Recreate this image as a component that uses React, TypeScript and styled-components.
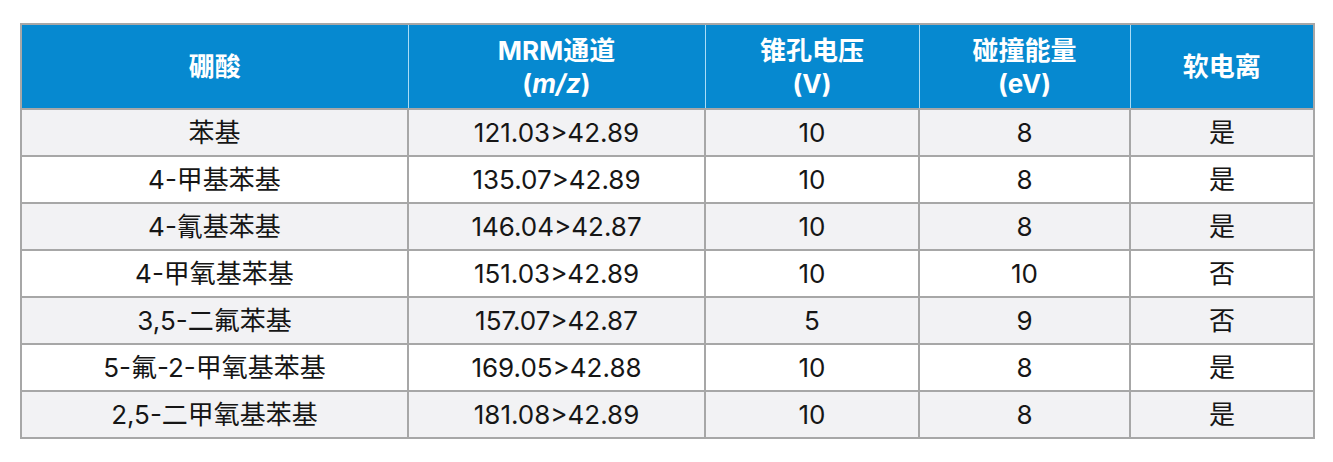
import React from 'react';
import styled, { createGlobalStyle } from 'styled-components';

const GlobalStyle = createGlobalStyle`
  body {
    margin: 0;
    background: #ffffff;
    font-family: Inter, 'Noto Sans CJK SC', sans-serif;
  }
`;

interface Row {
  name: string;
  mrm: string;
  cone: string;
  energy: string;
  soft: string;
}

const rows: Row[] = [
  { name: '苯基', mrm: '121.03>42.89', cone: '10', energy: '8', soft: '是' },
  { name: '4-甲基苯基', mrm: '135.07>42.89', cone: '10', energy: '8', soft: '是' },
  { name: '4-氰基苯基', mrm: '146.04>42.87', cone: '10', energy: '8', soft: '是' },
  { name: '4-甲氧基苯基', mrm: '151.03>42.89', cone: '10', energy: '10', soft: '否' },
  { name: '3,5-二氟苯基', mrm: '157.07>42.87', cone: '5', energy: '9', soft: '否' },
  { name: '5-氟-2-甲氧基苯基', mrm: '169.05>42.88', cone: '10', energy: '8', soft: '是' },
  { name: '2,5-二甲氧基苯基', mrm: '181.08>42.89', cone: '10', energy: '8', soft: '是' },
];

const widths = [387, 297, 214, 211, 184];

const Page = styled.div`
  padding: 23px 20px 0 20px;
`;

const Table = styled.table`
  border-collapse: collapse;
  table-layout: fixed;
  width: 1293px;
  border: 2px solid #a7a7a7;
`;

const HeadCell = styled.th`
  height: 83px;
  padding: 0;
  background: #0689d0;
  color: #ffffff;
  font-family: Inter, 'Noto Sans CJK SC', sans-serif;
  font-weight: 700;
  font-size: 26px;
  line-height: 33px;
  text-align: center;
  vertical-align: middle;
  border-left: 1px solid #a9dcf6;
  border-bottom: 2px solid #a7a7a7;
  &:first-child {
    border-left: none;
  }
`;

const BodyRow = styled.tr<{ $shaded: boolean }>`
  height: 47px;
  background: ${(p) => (p.$shaded ? '#f2f2f4' : '#ffffff')};
`;

const Cell = styled.td`
  padding: 0;
  color: #161616;
  font-family: Inter, 'Noto Sans CJK SC', sans-serif;
  font-size: 26px;
  line-height: 30px;
  text-align: center;
  vertical-align: middle;
  border: 2px solid #a7a7a7;
`;

export default function App() {
  return (
    <Page>
      <GlobalStyle />
      <Table>
        <colgroup>
          {widths.map((w, i) => (
            <col key={i} style={{ width: w }} />
          ))}
        </colgroup>
        <thead>
          <tr>
            <HeadCell>硼酸</HeadCell>
            <HeadCell>
              MRM通道
              <br />(<i>m/z</i>)
            </HeadCell>
            <HeadCell>
              锥孔电压
              <br />
              (V)
            </HeadCell>
            <HeadCell>
              碰撞能量
              <br />
              (eV)
            </HeadCell>
            <HeadCell>软电离</HeadCell>
          </tr>
        </thead>
        <tbody>
          {rows.map((r, i) => (
            <BodyRow key={r.name} $shaded={i % 2 === 0}>
              <Cell>{r.name}</Cell>
              <Cell>{r.mrm}</Cell>
              <Cell>{r.cone}</Cell>
              <Cell>{r.energy}</Cell>
              <Cell>{r.soft}</Cell>
            </BodyRow>
          ))}
        </tbody>
      </Table>
    </Page>
  );
}
